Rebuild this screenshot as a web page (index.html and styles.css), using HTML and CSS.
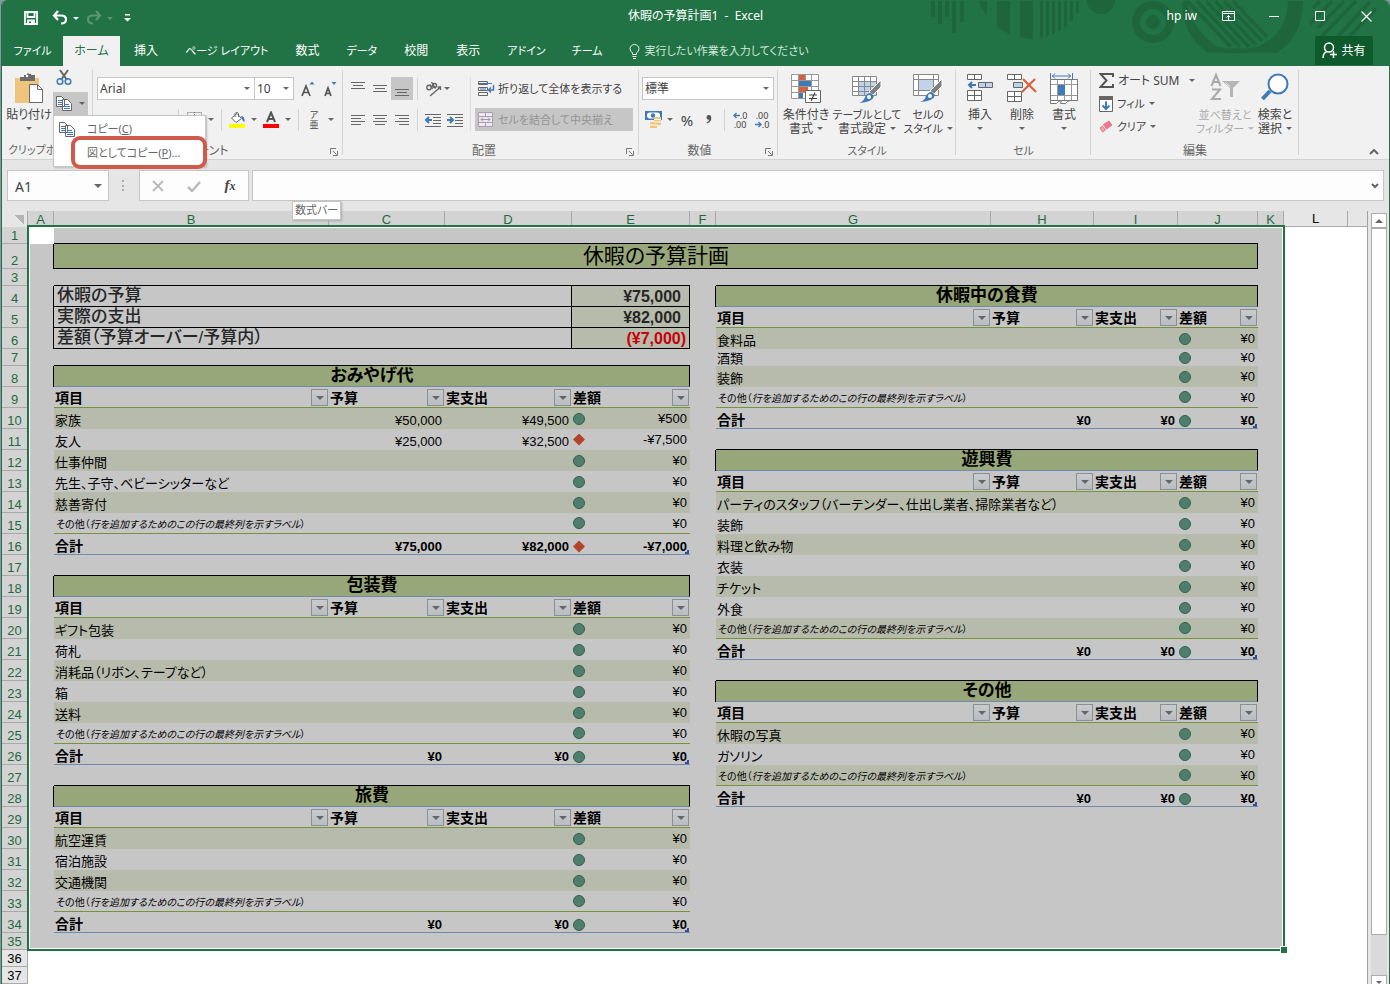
FILE: index.html
```html
<!DOCTYPE html>
<html lang="ja">
<head>
<meta charset="utf-8">
<title>休暇の予算計画1 - Excel</title>
<link rel="stylesheet" href="styles.css">
</head>
<body>
<div class="window">
  <header class="top">
    <svg class="deco" width="460" height="54" viewBox="930 0 460 54" aria-hidden="true">
      <g fill="#1e653c">
        <path d="M931 1h4v16h-4zM938 1h4v23h-4zM945 1h4v16h-4zM952 1h4v32h-4zM960 1h4v21h-4zM979 1h8v14q-6-6-8-14zM997 1h13v33q-8-3-13-8zM1020 1h13v38q-7 0-13-2zM1040 1h3v37h-3zM1046 1h3v35h-3zM1052 1h3v33h-3zM1058 1h3v30h-3zM1064 1h3v26h-3zM1070 1h3v20h-3zM1076 1h3v12h-3z"/>
        <path d="M1087 0h28a14 14 0 0 1-28 0z"/>
        <circle cx="1153" cy="22" r="7"/>
        <path d="M1182 1h5q3 26 30 46 18 3 40 0 30-12 31-46h15q0 36-27 52h-68q-26-19-26-52z"/>
      </g>
      <circle cx="1153" cy="22" r="17" fill="none" stroke="#1e653c" stroke-width="8"/>
      <g stroke="#1e653c" stroke-width="3.500"><path d="M1187 1l44 46M1197 1l43 46M1206 1l43 46M1215 1l41 44M1224 1l38 40M1233 1l34 36M1313 8l7-7M1310 24l22-23M1318 28l26-27M1322 36l34-35M1338 36l32-34M1350 36l26-27"/></g>
    </svg>
    <div class="titlebar">
      <div class="quick">
        <button class="qbtn save" aria-label="保存"><svg width="14" height="14" viewBox="0 0 14 14"><path d="M1 1h12v12H1zM3.500 1v5h7V1M4 13V9.500h6V13" fill="none" stroke="#fff" stroke-width="1.800"/><path d="M7 10h2v3H7z" fill="#fff"/></svg></button>
        <button class="qbtn" aria-label="元に戻す"><svg width="16" height="16" viewBox="0 0 16 16"><path d="M6 1L2 5.500l4 4.500M2.500 5.500H9q5 0 5 4t-5 4" fill="none" stroke="#fff" stroke-width="2.200"/></svg><i class="car light"></i></button>
        <button class="qbtn dim" aria-label="やり直し"><svg width="16" height="16" viewBox="0 0 16 16"><path d="M10 1l4 4.500-4 4.500M13.500 5.500H7q-5 0-5 4t5 4" fill="none" stroke="#fff" stroke-width="2.200"/></svg><i class="car light"></i></button>
        <button class="qbtn" aria-label="カスタマイズ"><svg width="7" height="8" viewBox="0 0 7 8"><path d="M1 0h5v1.500H1zM0 4h7L3.500 7.500z" fill="#fff"/></svg></button>
      </div>
      <h1 class="doc">休暇の予算計画1 &nbsp;-&nbsp; Excel</h1>
      <div class="sys">
        <span class="user">hp iw</span>
        <button class="sbtn" aria-label="リボンの表示オプション"><svg width="13" height="12" viewBox="0 0 13 12" fill="none" stroke="#fff"><path d="M.5 1.500h12v9H.5zM.5 3.500h12M6.500 10V5.500M4.500 7.500l2-2 2 2"/></svg></button>
        <button class="sbtn" aria-label="最小化"><svg width="10" height="10"><path d="M0 5.500h10" stroke="#fff"/></svg></button>
        <button class="sbtn" aria-label="最大化"><svg width="10" height="10"><path d="M.5.5h9v9h-9z" fill="none" stroke="#fff"/></svg></button>
        <button class="sbtn" aria-label="閉じる"><svg width="11" height="11"><path d="M.5.5l10 10M10.500.5l-10 10" stroke="#fff" stroke-width="1.200"/></svg></button>
      </div>
    </div>
    <nav class="tabs">
      <button class="tab file">ファイル</button>
      <button class="tab active">ホーム</button>
      <button class="tab">挿入</button>
      <button class="tab kana">ページ レイアウト</button>
      <button class="tab">数式</button>
      <button class="tab kana">データ</button>
      <button class="tab">校閲</button>
      <button class="tab">表示</button>
      <button class="tab kana">アドイン</button>
      <button class="tab kana">チーム</button>
      <button class="tab kana tell"><svg width="11" height="15" viewBox="0 0 11 15" fill="none" stroke="#e6f2ea"><path d="M3.500 10.500V9Q1 7 1 4.800a4.500 4.300 0 0 1 9 0Q10 7 7.500 9v1.500zM3.500 12.500h4M4 14.500h3"/></svg>実行したい作業を入力してください</button>
      <button class="share"><svg width="15" height="17" viewBox="0 0 15 17" fill="none" stroke="#fff" stroke-width="1.500"><circle cx="7" cy="5.500" r="4.500"/><path d="M1 16q0-5 4-6.500M8 12.500h7M11.500 9v7"/></svg>共有</button>
    </nav>
  </header>

  <section class="ribbon">
    <div class="group clip">
      <div class="gbody">
        <button class="big paste">
          <svg width="28" height="32" viewBox="0 0 28 32"><path d="M0 6h24v25H0z" fill="#efc57e"/><path d="M5 5h4V3h2.500q.5-3 3-1 1-1 2 1H20v6H5z" fill="#6b6b6b"/><circle cx="12" cy="4" r="1.300" fill="#fff"/><path d="M14.500 12.500h8l5 5v13h-13z" fill="#fff" stroke="#6b6b6b"/><path d="M22.500 12.500v5h5" fill="none" stroke="#6b6b6b"/></svg>
          <span>貼り付け</span><i class="car"></i></button>
        <div class="cliptools">
          <button class="ib" aria-label="切り取り"><svg width="16" height="17" viewBox="0 0 16 17" fill="none"><path d="M4 1l7 10M12 1L5 11" stroke="#666" stroke-width="2"/><circle cx="4" cy="12.500" r="2.800" stroke="#3f7ab8" stroke-width="1.500"/><circle cx="12" cy="12.500" r="2.800" stroke="#3f7ab8" stroke-width="1.500"/></svg></button>
          <div class="copywrap">
            <button class="copy" aria-label="コピー"><svg width="16" height="15" viewBox="0 0 16 15"><path d="M.5.5h5l3 3v7h-8zM6.500 3.500h5l4 4v7h-9z" fill="#fff" stroke="#666"/><path d="M2 4.500h4M2 6.500h4M2 8.500h4M8 8.500h5M8 10.500h6M8 12.500h6" stroke="#3f7ab8"/></svg><i class="car"></i></button>
            <div class="menu">
              <button class="mi"><svg width="16" height="15" viewBox="0 0 16 15"><path d="M.5.5h5l3 3v7h-8zM6.500 3.500h5l4 4v7h-9z" fill="#fff" stroke="#666"/><path d="M2 4.500h4M2 6.500h4M2 8.500h4M8 8.500h5M8 10.500h6M8 12.500h6" stroke="#3f7ab8"/></svg><span>コピー(<u>C</u>)</span></button>
              <button class="mi marked"><span>図としてコピー(<u>P</u>)...</span></button>
            </div>
          </div>
        </div>
      </div>
      <div class="glabel left">クリップボード</div>
    </div>

    <div class="group font">
      <div class="gbody rows">
        <div class="row">
          <label class="sel fontname"><select aria-label="フォント"><option>Arial</option></select></label>
          <label class="sel fontsize"><select aria-label="フォント サイズ"><option>10</option></select></label>
          <button class="ib" aria-label="拡大"><svg width="14" height="16" viewBox="0 0 14 16"><path d="M1 15L5 5l4 10M2.500 11.500h5" fill="none" stroke="#555" stroke-width="1.700"/><path d="M8.500 3.500h5l-2.500-3z" fill="#3f7ab8"/></svg></button>
          <button class="ib" aria-label="縮小"><svg width="14" height="16" viewBox="0 0 14 16"><path d="M2 15l3-8 3 8M3 12.500h4" fill="none" stroke="#555" stroke-width="1.700"/><path d="M8.500 1h5L11 4z" fill="#3f7ab8"/></svg></button>
        </div>
        <div class="row">
          <button class="ib"><b>B</b></button><button class="ib"><em>I</em></button><button class="ib"><u>U</u></button><i class="car cell"></i>
          <span class="sep"></span>
          <button class="ib" aria-label="罫線"><svg width="15" height="15"><path d="M.5.5h14v14H.5zM7.500 0v15M0 7.500h15" fill="none" stroke="#666" stroke-dasharray="1 1"/></svg></button><i class="car cell"></i>
          <span class="sep"></span>
          <button class="ib" aria-label="塗りつぶし"><svg width="16" height="17" viewBox="0 0 16 17"><path d="M2.500 7L8 2.500l4.500 5L7 11.500z" fill="#fff" stroke="#666"/><path d="M6 6V2.500a2 2 0 0 1 3.500 0V6" fill="none" stroke="#666"/><path d="M12 5q4 0 3.500 6-2-1-3-4z" fill="#3f7ab8"/><path d="M0 13h16v4H0z" fill="#ff0"/></svg></button><i class="car cell"></i>
          <button class="ib" aria-label="フォントの色"><svg width="16" height="17" viewBox="0 0 16 17"><path d="M4 11L8 1.500 12 11M5.500 8h5" fill="none" stroke="#555" stroke-width="2"/><path d="M0 13h16v4H0z" fill="red"/></svg></button><i class="car cell"></i>
          <span class="sep"></span>
          <button class="ib ruby" aria-label="ふりがな"><span>ア</span><span>亜</span></button><i class="car cell"></i>
        </div>
      </div>
      <div class="glabel launcher">フォント<svg class="launch" width="8" height="8"><path d="M.5 6V.5H6M3 3l3.500 3.500M7.500 3v4.500H3" fill="none" stroke="#777"/></svg></div>
    </div>

    <div class="group align">
      <div class="gbody rows">
        <div class="row">
          <button class="ib" aria-label="上揃え"><svg width="14" height="16"><path d="M0 1.500h14M2 4.500h10M0 7.500h14" stroke="#666"/></svg></button>
          <button class="ib" aria-label="上下中央揃え"><svg width="14" height="16"><path d="M0 4.500h14M2 7.500h10M0 10.500h14" stroke="#666"/></svg></button>
          <button class="ib on" aria-label="下揃え"><svg width="14" height="16"><path d="M0 8.500h14M2 11.500h10M0 14.500h14" stroke="#666"/></svg></button>
          <span class="sep"></span>
          <button class="ib" aria-label="方向"><svg width="17" height="16" viewBox="0 0 17 16" fill="none" stroke="#666" stroke-width="1.400"><circle cx="4" cy="6.500" r="2.200"/><path d="M5 3.500l2.500 4.500M6.500 1l4 6.500"/><circle cx="9.500" cy="4.500" r="2"/><path d="M5 15L15 6.500M15.500 9V6H12.500"/></svg></button><i class="car"></i>
        </div>
        <div class="row">
          <button class="ib" aria-label="左揃え"><svg width="14" height="16"><path d="M0 3.500h14M0 6.500h10M0 9.500h14M0 12.500h10" stroke="#666"/></svg></button>
          <button class="ib" aria-label="中央揃え"><svg width="14" height="16"><path d="M0 3.500h14M2 6.500h10M0 9.500h14M2 12.500h10" stroke="#666"/></svg></button>
          <button class="ib" aria-label="右揃え"><svg width="14" height="16"><path d="M0 3.500h14M4 6.500h10M0 9.500h14M4 12.500h10" stroke="#666"/></svg></button>
          <span class="sep"></span>
          <button class="ib" aria-label="インデントを減らす"><svg width="16" height="14"><path d="M0 1.500h16M8 4.500h8M8 7.500h8M8 10.500h8M0 13.500h16" stroke="#666"/><path d="M7 7H1M4 4L1 7l3 3" fill="none" stroke="#3f7ab8" stroke-width="2"/></svg></button>
          <button class="ib" aria-label="インデントを増やす"><svg width="16" height="14"><path d="M0 1.500h16M8 4.500h8M8 7.500h8M8 10.500h8M0 13.500h16" stroke="#666"/><path d="M0 7h6M3 4l3 3-3 3" fill="none" stroke="#3f7ab8" stroke-width="2"/></svg></button>
        </div>
      </div>
      <span class="vsep"></span>
      <div class="gbody rows">
        <button class="txt small"><svg width="17" height="16" viewBox="0 0 17 16" fill="none"><path d="M.5.5h9v3h-9zM.5 6.500h9v3h-9zM.5 11.500h9v3h-9z" stroke="#666"/><path d="M1 2.500h13M2 8h6" stroke="#3f7ab8"/><path d="M15.500 4v5H11M13 6.500L10.500 9l2.500 2.500" stroke="#3f7ab8" stroke-width="1.500"/></svg>折り返して全体を表示する</button>
        <button class="txt small off"><svg width="15" height="15" fill="none"><path d="M.5.5h14v14H.5zM.5 4.500h14M.5 10.500h14M7.500.5v4M7.500 10.500v4" fill="#eee6f0" stroke="#a99fae"/><path d="M3 7.500h9M5 5.500l-2 2 2 2M10 5.500l2 2-2 2" stroke="#999"/></svg>セルを結合して中央揃え</button>
      </div>
      <div class="glabel launcher">配置<svg class="launch" width="8" height="8"><path d="M.5 6V.5H6M3 3l3.500 3.500M7.500 3v4.500H3" fill="none" stroke="#777"/></svg></div>
    </div>

    <div class="group number">
      <div class="gbody rows">
        <label class="sel full"><select aria-label="表示形式"><option>標準</option></select></label>
        <div class="row">
          <button class="ib" aria-label="通貨"><svg width="17" height="17" viewBox="0 0 17 17"><path d="M0 0h17v9H0z" fill="#3f7ab8"/><path d="M2 3l2-1.500h9L15 3v3l-2 1.500H4L2 6z" fill="#fff"/><circle cx="8" cy="4.500" r="2.200" fill="#3f7ab8"/><path d="M9 6h7v8h-4v3H5v-6h4z" fill="#efc57e"/><path d="M9 8.500h7M9 11h7M5 14h7" stroke="#fff"/></svg></button><i class="car cell"></i>
          <button class="ib pct">%</button>
          <button class="ib" aria-label="桁区切りスタイル"><svg width="6" height="9" viewBox="0 0 6 9"><path d="M.5 2.500a2.300 2.300 0 0 1 4.800 0Q5.500 7 1 8.500L.6 7.600Q3 6.500 3.200 4.800 .5 5 .5 2.500z" fill="#555"/></svg></button>
          <span class="sep"></span>
          <button class="ib dec" aria-label="小数点以下の表示桁数を増やす"><span><svg width="7" height="7"><path d="M7 3.500H1M3.500 1L1 3.500 3.500 6" fill="none" stroke="#3f7ab8" stroke-width="1.400"/></svg>.0</span><span>.00</span></button>
          <button class="ib dec" aria-label="小数点以下の表示桁数を減らす"><span>.00</span><span><svg width="7" height="7"><path d="M0 3.500h6M3.500 1L6 3.500 3.500 6" fill="none" stroke="#3f7ab8" stroke-width="1.400"/></svg>.0</span></button>
        </div>
      </div>
      <div class="glabel launcher">数値<svg class="launch" width="8" height="8"><path d="M.5 6V.5H6M3 3l3.500 3.500M7.500 3v4.500H3" fill="none" stroke="#777"/></svg></div>
    </div>

    <div class="group styles">
      <div class="gbody">
        <button class="big"><svg width="30" height="32" viewBox="0 0 30 32"><path d="M.5 2.500h27v24H.5z" fill="#fff"/><path d="M8 2h6v6H8zM8 14h9v6H8z" fill="#d9603f"/><path d="M8 8h12v6H8zM8 20h4v6H8z" fill="#3f7ab8"/><path d="M.5 2.500h27v24H.5zM7.500 2v25M14.500 2v6M20.500 2v25M0 8.500h28M0 14.500h28M0 20.500h28" fill="none" stroke="#999"/><path d="M14.500 18.500h15v12h-15z" fill="#fff" stroke="#666"/><path d="M18 23h8M18 26.500h8M24 20.500l-4 8.500" stroke="#444" stroke-width="1.200"/></svg><span>条件付き</span><span>書式<i class="car"></i></span></button>
        <button class="big mid"><svg width="30" height="32" viewBox="0 0 30 32"><path d="M.5 4.500h24v19H.5z" fill="#fff"/><path d="M7 9h18v14H7z" fill="#c0d3e8"/><path d="M.5 4.500h24v19H.5zM6.500 4v20M12.500 4v20M18.500 4v20M0 9.500h25M0 14.500h25M0 19.500h25" fill="none" stroke="#888"/><path d="M29 8v7l-8 8-4-3z" fill="#808080" stroke="#fff"/><path d="M19 21l3 3q-1 6-15 7 5-2 6-6 2-4 6-4z" fill="#3f7ab8"/><circle cx="17" cy="25" r="2" fill="#fff"/></svg><span class="small">テーブルとして</span><span>書式設定<i class="car"></i></span></button>
        <button class="big"><svg width="30" height="32" viewBox="0 0 30 32"><path d="M.5 2.500h25v21H.5z" fill="#fff"/><path d="M6 7h15v12H6z" fill="#c0d3e8"/><path d="M.5 2.500h25v21H.5zM5.500 2v22M20.500 2v22M0 7.500h26M0 18.500h26" fill="none" stroke="#888"/><path d="M29 7v7l-8 8-4-3z" fill="#808080" stroke="#fff"/><path d="M19 20l3 3q-1 6-15 7 5-2 6-6 2-4 6-4z" fill="#3f7ab8"/><circle cx="17" cy="24" r="2" fill="#fff"/></svg><span class="small">セルの</span><span class="small">スタイル<i class="car"></i></span></button>
      </div>
      <div class="glabel small">スタイル</div>
    </div>

    <div class="group cells">
      <div class="gbody">
        <button class="big"><svg width="26" height="32" viewBox="0 0 26 32" fill="#fff" stroke="#666"><path d="M.5 2.500h14v5H.5zM7.500 2v6M.5 18.500h14v10H.5zM7.500 18v11M0 23.500h15"/><path d="M11.500 10.500h14v5h-14zM18.500 10v6" fill="#c0d3e8"/><path d="M9 13H2M5 10l-3 3 3 3" fill="none" stroke="#3f7ab8" stroke-width="2"/></svg><span>挿入</span><i class="car"></i></button>
        <button class="big"><svg width="30" height="32" viewBox="0 0 30 32" fill="#fff" stroke="#666"><path d="M.5 2.500h14v5H.5zM7.500 2v6M.5 19.500h14v10H.5zM7.500 19v11M0 24.500h15"/><path d="M6.500 10.500h9v5h-9z" fill="#c0d3e8"/><path d="M16 7l13 13M28 7L15 20" fill="none" stroke="#d9603f" stroke-width="2.200"/></svg><span>削除</span><i class="car"></i></button>
        <button class="big"><svg width="28" height="32" viewBox="0 0 28 32" fill="#fff" stroke="#999"><path d="M.5 7.500h27v21H.5zM0 12.500h28M0 23.500h28M7.500 7v22M14.500 7v22M21.500 7v22"/><path d="M.5 28.500v3h6q2-3 5-3l-1 3h5q2-3 5-3" stroke="#777"/><path d="M.5 7.500h27v21H.5z" fill="none" stroke="#777"/><path d="M8 13h7v10H8z" fill="#3f7ab8" stroke="none"/><path d="M.5 1v6M22.500 1v6M2 4h19M5 1.500L2.500 4 5 6.500M18 1.500L20.500 4 18 6.500" fill="none" stroke="#3f7ab8"/></svg><span>書式</span><i class="car"></i></button>
      </div>
      <div class="glabel small">セル</div>
    </div>

    <div class="group edit">
      <div class="gbody">
        <div class="stack">
          <button class="txt"><svg width="15" height="15"><path d="M14 4V1H1.500l6 6.500-6 6.500H14v-3" fill="none" stroke="#555" stroke-width="2"/></svg>オート SUM<i class="car far"></i></button>
          <button class="txt small"><svg width="14" height="16"><path d="M.5.5h13v15H.5z" fill="#fff" stroke="#666"/><path d="M0 0h14v4H0z" fill="#666"/><path d="M7 5.500V13M3.500 9.500L7 13l3.500-3.500" fill="none" stroke="#3f7ab8" stroke-width="2"/></svg>フィル<i class="car"></i></button>
          <button class="txt small"><svg width="14" height="13" viewBox="0 0 14 13"><path d="M4.500 4.500L10 1l3 4-5.500 4z" fill="#e8788c" stroke="#e8788c"/><path d="M3.500 6l3 4-3 2L1 8z" fill="#f0a5b2" stroke="#e8788c"/></svg>クリア<i class="car"></i></button>
        </div>
        <button class="big dis"><svg width="30" height="32" viewBox="0 0 30 32" fill="none" stroke="#aaa" stroke-width="2"><path d="M1.500 14L6 3l4.500 11M3 10h6M2 17.500h8L2 27h9"/><path d="M12 9h18l-7 7v9h-3v-9z" fill="#b5b5b5" stroke="none"/><path d="M15.500 10.500l4.500 4" stroke="#f1f1f1" stroke-width="1"/></svg><span class="small">並べ替えと</span><span class="small">フィルター<i class="car"></i></span></button>
        <button class="big find"><svg width="28" height="32" viewBox="0 0 28 32"><path d="M9 19L1.500 27" stroke="#3f7ab8" stroke-width="4"/><circle cx="17" cy="12" r="9.500" fill="#fff" stroke="#3f7ab8" stroke-width="2"/></svg><span>検索と</span><span>選択<i class="car"></i></span></button>
      </div>
      <div class="glabel">編集</div>
    </div>
    <button class="collapse" aria-label="リボンを折りたたむ"><svg width="10" height="6"><path d="M1 5l4-4 4 4" fill="none" stroke="#666" stroke-width="2"/></svg></button>
  </section>

  <section class="fbar">
    <label class="namebox"><input type="text" value="A1" aria-label="名前ボックス"><i class="car"></i></label>
    <span class="dots"></span>
    <div class="fxbox">
      <button aria-label="キャンセル"><svg width="12" height="12"><path d="M1 1l10 10M11 1L1 11" stroke="#bbb" stroke-width="2"/></svg></button>
      <button aria-label="入力"><svg width="14" height="12"><path d="M1 7l4 4 8-9" fill="none" stroke="#bbb" stroke-width="2.500"/></svg></button>
      <button class="fx" aria-label="関数の挿入">f<small>x</small></button>
    </div>
    <div class="formula"><input type="text" aria-label="数式バー"><svg width="8" height="6"><path d="M1 1l3 3 3-3" fill="none" stroke="#666" stroke-width="2"/></svg>
      <div class="tip">数式バー</div></div>
  </section>

  <main class="sheet">
    <div class="grid">
      <table class="cells-table">
        <colgroup><col class="ch"><col class="ca"><col class="cb"><col class="cc"><col class="cd"><col class="ce"><col class="ca"><col class="cb"><col class="chh"><col class="ci"><col class="cj"><col class="ca"><col class="cl"><col></colgroup>
        <thead><tr><th class="corner"></th><th>A</th><th>B</th><th>C</th><th>D</th><th>E</th><th>F</th><th>G</th><th>H</th><th>I</th><th>J</th><th>K</th><th class="un">L</th><th class="un"></th></tr></thead>
        <tbody id="rows"></tbody>
      </table>
      <div class="selection"><span class="handle"></span></div>
    </div>
    <div class="scroll"><button class="up" aria-label="上へ"><i class="car flip"></i></button><div class="thumb"></div><div class="track"></div><button class="down" aria-label="下へ"><i class="car"></i></button></div>
  </main>
</div>
<script src="sheet.js"></script>
</body>
</html>
```

FILE: sheet.js
```js
const OTHER = 'その他';
const left = {
  8: { title: 'おみやげ代', items: [['家族', '¥50,000', '¥49,500', '¥500'], ['友人', '¥25,000', '¥32,500', '-¥7,500'], ['仕事仲間'], ['先生、子守、ベビーシッターなど'], ['慈善寄付'], [OTHER]], total: ['¥75,000', '¥82,000', '-¥7,000'] },
  18: { title: '包装費', items: [['ギフト包装'], ['荷札'], ['消耗品（リボン、テープなど）'], ['箱'], ['送料'], [OTHER]], total: ['¥0', '¥0', '¥0'] },
  28: { title: '旅費', items: [['航空運賃'], ['宿泊施設'], ['交通機関'], [OTHER]], total: ['¥0', '¥0', '¥0'] }
};
const right = {
  4: { title: '休暇中の食費', items: [['食料品'], ['酒類'], ['装飾'], [OTHER]], total: ['¥0', '¥0', '¥0'] },
  12: { title: '遊興費', items: [['パーティのスタッフ（バーテンダー、仕出し業者、掃除業者など）'], ['装飾'], ['料理と飲み物'], ['衣装'], ['チケット'], ['外食'], [OTHER]], total: ['¥0', '¥0', '¥0'] },
  23: { title: 'その他', items: [['休暇の写真'], ['ガソリン'], [OTHER]], total: ['¥0', '¥0', '¥0'] }
};

const diff = v => `<div class="diff"><i class="${v[0] === '-' ? 'bad' : 'good'}"></i><span>${v}</span></div>`;

function buildSide(sections) {
  const rows = {};
  for (const [start, s] of Object.entries(sections)) {
    let r = +start;
    rows[r++] = `<td colspan="4" class="title">${s.title}</td>`;
    rows[r++] = ['項目', '予算', '実支出', '差額'].map(h =>
      `<td class="head"><div>${h}<button class="filter" aria-label="${h}の絞り込み"><i class="car"></i></button></div></td>`).join('');
    s.items.forEach(([name, b = '', a = '', d = '¥0'], i) => {
      const other = name === OTHER;
      const cls = (i % 2 ? '' : 'band ') + (other ? 'last' : '');
      const label = other ? '<small>その他（<em>行を追加するためのこの行の最終列を示すラベル</em>）</small>' : name;
      rows[r++] = `<td colspan="${b ? 1 : 2}" class="item ${cls}">${label}</td>` + (b ? `<td class="num item ${cls}">${b}</td>` : '') +
        `<td class="num item ${cls}">${a}</td><td class="mid ${cls}">${diff(d)}</td>`;
    });
    const [b, a, d] = s.total;
    rows[r] = `<td class="total sum">合計</td><td class="num total">${b}</td><td class="num total">${a}</td><td class="total end">${diff(d)}</td>`;
  }
  return rows;
}

const L = buildSide(left), R = buildSide(right);
const summary = [['休暇の予算', '¥75,000'], ['実際の支出', '¥82,000'], ['差額（予算オーバー/予算内）', '(¥7,000)']];
summary.forEach(([k, v], i) => {
  L[4 + i] = `<td colspan="3" class="sk">${k}</td><td class="sv${i === 2 ? ' neg' : ''}">${v}</td>`;
});

const short = [1, 3, 7, 35, 36, 37];
let html = '';
for (let r = 1; r <= 37; r++) {
  const size = r === 2 ? 'tall' : short.includes(r) ? 'short' : 'norm';
  const sel = r < 36 ? 'sel-row' : 'free';
  const body = r === 2 ? '<td colspan="9" class="main">休暇の予算計画</td>'
    : (L[r] || '<td colspan="4"></td>') + '<td></td>' + (R[r] || '<td colspan="4"></td>');
  html += `<tr class="${size} ${sel}"><th>${r}</th><td${r === 1 ? ' class="cur"' : ''}></td>${body}<td></td><td class="out"></td><td class="out"></td></tr>`;
}
document.getElementById('rows').innerHTML = html;
```

FILE: styles.css
```css
*, *::before, *::after { box-sizing: border-box; }
body { margin: 0; background: #8b93a8; font: 12px/14px "Noto Sans", "Noto Sans CJK JP", sans-serif; font-feature-settings: "palt"; color: #444; overflow: hidden; }
button { font: inherit; font-feature-settings: inherit; color: inherit; background: none; border: 0; padding: 0; margin: 0; white-space: nowrap; }
input, select { font: inherit; color: inherit; border: 0; background: none; outline: 0; }
svg { display: block; flex: none; }
.small { font-size: 11px; }
.window { display: flex; flex-direction: column; height: 100vh; margin-left: 1px; border: solid #217346; border-width: 0 1px; border-radius: 6px 6px 0 0; overflow: hidden; background: #e6e6e6; }

.top { position: relative; background: #217346; color: #fff; }
.deco { position: absolute; top: 0; right: -1px; }
.titlebar { position: relative; display: grid; grid-template-columns: 1fr auto 1fr; align-items: center; height: 36px; }
.quick { display: flex; align-items: center; gap: 7px; padding-left: 22px; }
.qbtn { display: flex; align-items: center; gap: 5px; }
.save { margin-right: 7px; }
.qbtn:last-child { padding-left: 4px; }
.dim { opacity: .25; }
.doc { margin: -4px 0 0; font-size: 12px; line-height: 16px; font-weight: 400; }
.sys { display: flex; align-items: center; justify-content: flex-end; height: 32px; margin-bottom: 4px; }
.user { padding-right: 8px; }
.sbtn { display: flex; justify-content: center; width: 46px; }
.car { display: inline-block; flex: none; width: 0; height: 0; border: 3px solid transparent; border-top-color: #666; border-bottom: 0; }
.car.light { border-top-color: #fff; }
.car.flip { border: 4px solid transparent; border-bottom-color: #666; border-top: 0; }

.tabs { position: relative; display: flex; height: 30px; }
.tab { padding: 0 14px; line-height: 28px; }
.tab.kana { padding: 0 13px; font-size: 11px; }
.tab.file { width: 61px; padding: 0; font-size: 11px; }
.tab.active { width: 57px; padding: 0; background: #f1f1f1; color: #217346; }
.tell { display: flex; align-items: center; gap: 5px; color: #d4e8da; }
.share { display: flex; align-items: center; justify-content: center; gap: 4px; width: 58px; height: 29px; margin: 0 16px 0 auto; background: #0e5a2d; }

.ribbon { display: flex; flex: none; height: 94px; background: #f1f1f1; border-bottom: 1px solid #d2d2d2; }
.group { display: grid; grid-template-rows: 76px 17px; grid-auto-flow: column; flex: none; position: relative; }
.group::after { content: ""; position: absolute; right: 0; top: 4px; bottom: 4px; width: 1px; background: #d4d4d4; }
.clip { width: 91px; z-index: 2; }
.font { width: 250px; }
.align { width: 296px; grid-template-columns: 119px 9px 1fr; padding-left: 4px; }
.number { width: 139px; }
.styles { width: 178px; }
.cells { width: 135px; }
.edit { width: 208px; }
.gbody { display: flex; grid-row: 1; min-width: 0; }
.glabel { grid-row: 2; grid-column: 1 / -1; display: flex; justify-content: center; align-items: center; color: #666; line-height: 16px; white-space: nowrap; }
.glabel.launcher { padding-right: 18px; }
.glabel.left { display: block; width: 84px; padding-left: 6px; overflow: hidden; font-size: 11px; }
.launch { position: absolute; right: 5px; bottom: 3px; }
.rows { display: flex; flex-direction: column; gap: 8px; padding-top: 11px; }
.font .rows { padding-left: 3px; }
.number .rows { padding-left: 3px; }
.row { display: flex; align-items: center; height: 23px; }
.ib { display: flex; justify-content: center; align-items: center; width: 22px; height: 23px; flex: none; font-size: 14px; }
.ib.on { background: #c6c6c6; }
.car.cell { margin: 0 3px; }
.sep { width: 1px; height: 22px; margin: 0 4px; background: #d4d4d4; flex: none; }
.vsep { grid-row: 1; width: 1px; height: 54px; margin: 11px 4px 0; background: #dcdcdc; }
.sel { display: flex; align-items: center; position: relative; height: 23px; background: #fff; border: 1px solid #c6c6c6; }
.sel::after { content: ""; position: absolute; right: 4px; border: 3px solid transparent; border-top-color: #666; border-bottom: 0; }
.sel select { appearance: none; width: 100%; padding: 0 2px; }
.sel.fontname { width: 158px; margin-left: 1px; }
.sel.fontsize { width: 40px; margin: 0 3px 0 -1px; }
.sel.full { width: 132px; }
.ruby { flex-direction: column; font-size: 9px; line-height: 10px; }
.pct { font-size: 15px; }
.dec { flex-direction: column; font: 9px/9px "Noto Sans", sans-serif; align-items: center; }
.dec span { display: flex; align-items: center; }
.txt { display: flex; align-items: center; gap: 3px; height: 23px; padding: 0 3px; }
.txt.off { width: 158px; gap: 5px; background: #c6c6c6; color: #949494; }
.big { display: flex; flex-direction: column; align-items: center; padding-top: 6px; width: 42px; }
.big > svg { margin-bottom: 4px; }
.big > .car { margin-top: 5px; }
.big span .car { margin: 0 0 3px 4px; }
.paste { width: 48px; margin-left: 3px; }
.cliptools { display: flex; flex-direction: column; gap: 3px; }
.copywrap { position: relative; }
.copy { display: flex; align-items: center; gap: 7px; width: 35px; height: 23px; padding-left: 3px; background: #c6c6c6; }
.menu { position: absolute; z-index: 5; top: 23px; left: 0; width: 153px; padding: 1px; background: #fff; border: 1px solid #c6c6c6; box-shadow: 1px 1px 2px #bbb; font-size: 11px; }
.mi { display: flex; align-items: center; gap: 12px; width: 100%; height: 24px; padding-left: 4px; color: #666; }
.mi.marked { position: relative; padding-left: 32px; }
.mi.marked::after { content: ""; position: absolute; left: 16px; top: -5px; width: 136px; height: 33px; border: 4px solid #cf5a4b; border-radius: 9px; }
.styles .big { width: 56px; }
.styles .mid { width: 66px; }
.cells .gbody { padding-left: 3px; }
.edit .gbody { padding-left: 5px; }
.stack { display: flex; flex-direction: column; width: 102px; padding-top: 3px; }
.stack .txt { gap: 4px; }
.car.far { margin-left: 6px; }
.edit .dis { width: 54px; color: #aaa; }
.dis .car { border-top-color: #bbb; }
.edit .find { width: 46px; }
.collapse { margin: auto 10px 4px auto; }

.fbar { display: flex; flex: none; height: 51px; padding: 10px 5px 0; }
.namebox, .fxbox, .formula { display: flex; align-items: center; height: 31px; background: #fdfdfd; border: 1px solid #c6c6c6; }
.namebox { width: 102px; padding-right: 6px; }
.namebox input { width: 86px; padding: 2px 0 0 7px; font-size: 14px; }
.namebox .car { border-width: 4px 4px 0; }
.dots { width: 3px; height: 11px; margin: 10px 14px 0 13px; border-left: 2px dotted #aaa; }
.fxbox { width: 110px; margin-right: 3px; }
.fxbox button { display: flex; justify-content: center; flex: 1; }
.fxbox .fx { font: italic bold 15px/16px "Liberation Serif", serif; }
.fx small { font-size: 12px; padding-top: 1px; }
.formula { position: relative; flex: 1; padding-right: 4px; }
.formula input { flex: 1; min-width: 0; height: 28px; }
.tip { position: absolute; left: 39px; top: 30px; z-index: 3; padding: 1px 2px 2px; background: #fff; border: 1px solid #c6c6c6; box-shadow: 1px 1px 2px #aaa; color: #666; font-size: 11px; }

.sheet { display: flex; flex: 1; min-height: 0; }
.grid { position: relative; flex: 1; background: #fff; border-right: 1px solid #a0a0a0; }
.cells-table { width: 100%; table-layout: fixed; border-spacing: 0; font: 13px/15px "Liberation Sans", "Noto Sans CJK JP", sans-serif; font-feature-settings: "palt"; color: #000; }
.ch { width: 26px; } .ca { width: 26px; } .cb { width: 275px; } .cc { width: 116px; } .cd { width: 127px; } .ce { width: 118px; }
.chh { width: 103px; } .ci { width: 84px; } .cj { width: 80px; } .cl { width: 64px; }
.cells-table th, .cells-table td { padding: 0; overflow: hidden; white-space: nowrap; vertical-align: bottom; text-align: left; }
.cells-table th { text-align: center; font-weight: 400; background: #d3d3d3; color: #1e6b41; border-right: 1px solid #a9a9a9; }
.cells-table tbody th { border-bottom: 1px solid #a9a9a9; line-height: 14px; }
.cells-table thead th { height: 16px; line-height: 15px; }
.cells-table th.un, .cells-table .free th { background: #e6e6e6; color: #000; }
.cells-table th.un:last-child { border-right: 0; }
.cells-table thead th.un { border-bottom: 1px solid #a9a9a9; }
.cells-table thead .corner { background: linear-gradient(135deg, #b5b5b5, #b5b5b5) #e6e6e6; clip-path: none; background: conic-gradient(from 315deg at 100% 100%, #b5b5b5 45deg, #e6e6e6 0) right 3px bottom 3px / 9px 9px no-repeat #e6e6e6; }
.norm > * { height: 21px; } .short > * { height: 17px; } .tall > * { height: 25px; }
.sel-row td { background: #c6c6c6; }
.sel-row td.cur, .sel-row td.out { background: #fff; }
.sel-row td.band { background: #b7bbab; }
.cells-table td:nth-child(n+3) { padding-left: 1px; }
.cells-table .norm td.item { padding-bottom: 1px; }
.cells-table td.num { text-align: right; padding-right: 3px; }
.cells-table .mid { vertical-align: middle; }
.cells-table .last { border-bottom: 1px solid #76923c; }
.cells-table td small { font-size: 10px; padding-left: 1px; }
.cells-table td.title, .cells-table td.main { background: #98a779; text-align: center; border-right: 1px solid #000; box-shadow: 0 -1px #000, -1px 0 #000; }
.cells-table td.title { font-size: 17px; line-height: 20px; font-weight: 700; border-bottom: 1px solid #6f8bb0; }
.cells-table td.main { font-size: 21px; line-height: 24px; border-bottom: 1px solid #000; }
.cells-table td.head { font-size: 14px; font-weight: 700; border-bottom: 1px solid #76923c; }
.head div { display: flex; justify-content: space-between; align-items: flex-end; line-height: 17px; padding-right: 1px; }
.filter { display: flex; justify-content: center; align-items: center; width: 17px; height: 17px; margin-bottom: 1px; background: linear-gradient(#c9cbcd, #b9bdc2); border: 1px solid #8a8f94; }
.filter .car { border-width: 4px 4px 0; }
.cells-table td.total { font-weight: 700; border-bottom: 1px solid #6f8bb0; }
.cells-table td.sum { font-size: 14px; }
.diff { display: flex; justify-content: space-between; align-items: center; padding-right: 3px; }
.good { width: 12px; height: 12px; background: #4f7f6c; border: 1px solid #35604f; border-radius: 50%; }
.bad { width: 12px; height: 12px; background: #b5432a; clip-path: polygon(50% 0, 100% 50%, 50% 100%, 0 50%); }
.cells-table td.end { background: linear-gradient(#3b4a96, #3b4a96) right 1px bottom 0 / 4px 2px no-repeat, linear-gradient(#3b4a96, #3b4a96) right 1px bottom 0 / 2px 4px no-repeat, #c6c6c6; }
.cells-table td.sk, .cells-table td.sv { font-size: 17px; line-height: 20px; font-weight: 500; color: #262626; border: solid #000; border-width: 0 1px 1px 0; box-shadow: 0 -1px #000, -1px 0 #000; }
.cells-table td.sk { padding-left: 3px; }
.cells-table td.sv { background: #b7bbab; font-size: 16px; line-height: 18px; font-weight: 700; text-align: right; padding-right: 8px; }
.cells-table td.neg { color: #c8000a; padding-right: 3px; }
.selection { position: absolute; left: 25px; top: 14px; width: 1258px; height: 726px; border: 2px solid #217346; box-shadow: inset 0 0 0 1px #fff; pointer-events: none; }
.handle { position: absolute; right: -4px; bottom: -4px; width: 7px; height: 7px; background: #217346; border: solid #fff; border-width: 1px 0 0 1px; }

.scroll { display: flex; flex-direction: column; width: 16px; margin: 2px 2px -6px 3px; background: #dadada; }
.scroll button { display: flex; justify-content: center; align-items: center; height: 15px; background: #fff; border: 1px solid #ababab; }
.thumb { flex: 1; background: #fff; border: 1px solid #ababab; }
.track { height: 40px; }
```
